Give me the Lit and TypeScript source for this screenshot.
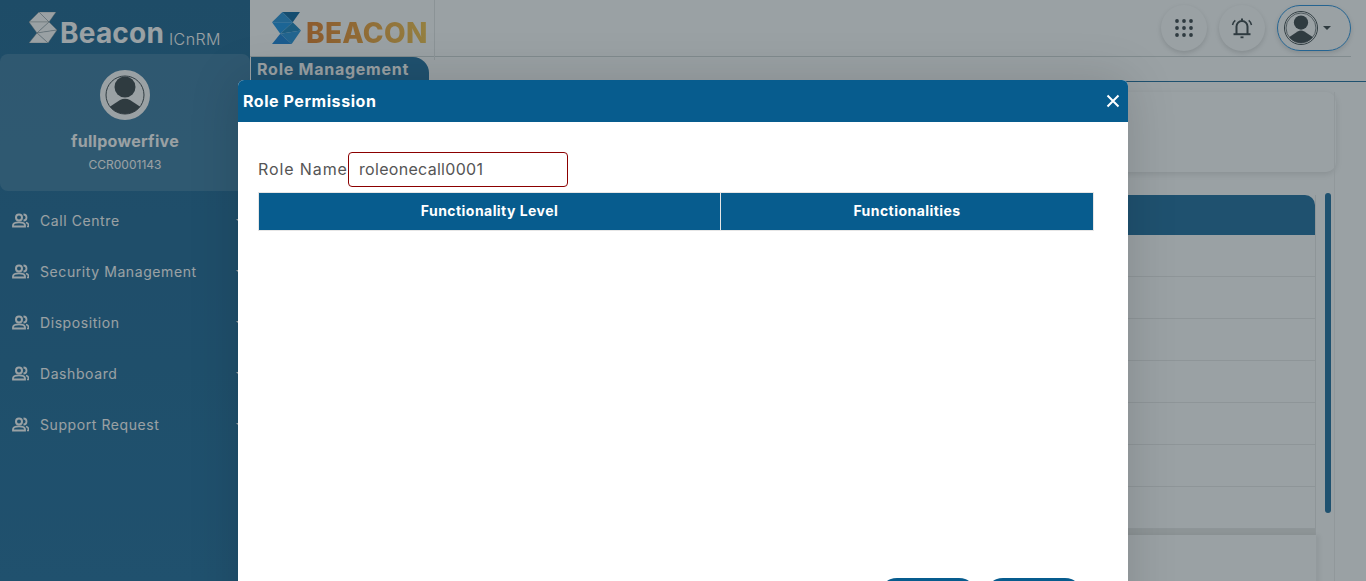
import { LitElement, html, css, svg } from "lit";
import { customElement } from "lit/decorators.js";

const MENU = ["Call Centre", "Security Management", "Disposition", "Dashboard", "Support Request"];
const ROWS = [0, 1, 2, 3, 4, 5, 6];

// same figure in the sidebar card and the header pill
const avatar = (size: number, ring: string, ringW: number, r: number) => html`
  <svg width=${size} height=${size} viewBox="0 0 50 50">
    <defs><clipPath id="av${size}"><circle cx="25" cy="25" r=${r}></circle></clipPath></defs>
    <circle cx="25" cy="25" r="24" fill="#fff"></circle>
    <circle cx="25" cy="25" r=${25 - ringW / 2} fill="none" stroke=${ring} stroke-width=${ringW}></circle>
    <circle cx="25" cy="25" r=${r} fill="none" stroke="#4d5559" stroke-width="1"></circle>
    <g clip-path="url(#av${size})" fill="#4d5559">
      <circle cx="25" cy="17" r="10.5"></circle>
      <path d="M2 42 L20 30 Q25 27.500 30 30 L48 42 V50 H2 Z"></path>
    </g>
  </svg>`;

// S mark, six facets, outlined thinly so the folds show on the flat version
const sMark = (w: number, h: number, c: string[], line = "none") => html`
  <svg width=${w} height=${h} viewBox="0 0 28 31" stroke=${line} stroke-width="0.4">
    <polygon points="10,0 27,0 20,10" fill=${c[0]}></polygon>
    <polygon points="10,0 20,10 0,10" fill=${c[1]}></polygon>
    <polygon points="0,10 20,10 8,21" fill=${c[2]}></polygon>
    <polygon points="20,10 28,18 8,21" fill=${c[3]}></polygon>
    <polygon points="8,21 28,18 19,31" fill=${c[4]}></polygon>
    <polygon points="8,21 19,31 0,31" fill=${c[5]}></polygon>
  </svg>`;

const usersIcon = svg`
  <circle cx="7" cy="4.500" r="3" fill="none" stroke="currentColor" stroke-width="2"></circle>
  <path d="M11.500 1.500a3 3 0 0 1 0 6" fill="none" stroke="currentColor" stroke-width="1.800"></path>
  <path d="M1 13.500v-1.200c0-2 2.200-3 6-3s6 1 6 3v1.200z" fill="none" stroke="currentColor" stroke-width="1.800"></path>
  <path d="M14 9.500c1.700.4 2.500 1.300 2.500 2.800v1.200H15" fill="none" stroke="currentColor" stroke-width="1.600"></path>`;

@customElement("app-root")
export class AppRoot extends LitElement {
  static styles = css`
    :host {
      display: block;
      position: relative;
      width: 1366px;
      height: 581px;
      overflow: hidden;
      font-family: Inter, "Liberation Sans", sans-serif;
      background: #fff;
    }
    .page {
      display: flex;
      height: 581px;
    }
    .side {
      width: 250px;
      flex: none;
      background: linear-gradient(180deg, #31729a 0%, #347aa5 100%);
      color: #fff;
    }
    .side-logo {
      height: 54px;
      display: flex;
      align-items: center;
      padding-left: 29px;
      box-sizing: border-box;
    }
    .side-logo .big {
      font-size: 28px;
      font-weight: 700;
      letter-spacing: 0.2px;
      margin-left: 3px;
      margin-top: 12px;
    }
    .side-logo .small {
      font-size: 16px;
      font-weight: 300;
      letter-spacing: 0.4px;
      margin-left: 5px;
      margin-top: 24px;
    }
    .profile {
      height: 137px;
      box-sizing: border-box;
      padding-top: 16px;
      border-radius: 8px;
      background: rgba(255, 255, 255, 0.14);
      display: flex;
      flex-direction: column;
      align-items: center;
    }
    .profile .name {
      font-size: 16px;
      font-weight: 700;
      letter-spacing: 0.3px;
      margin-top: 11px;
    }
    .profile .code {
      font-size: 12px;
      margin-top: 6px;
    }
    .menu {
      padding-top: 4px;
    }
    .item {
      height: 51px;
      display: flex;
      align-items: center;
      padding-left: 12px;
      font-size: 14px;
      letter-spacing: 0.58px;
    }
    .item svg {
      margin-right: 11px;
    }
    .caret {
      width: 0;
      height: 0;
      margin-left: auto;
      margin-right: 6px;
      border: 4px solid transparent;
      border-top-color: #fff;
      border-bottom: 0;
    }
    .main {
      flex: 1;
      min-width: 0;
    }
    .top {
      height: 57px;
      box-sizing: border-box;
      margin-right: 15px;
      border-bottom: 1px solid #d6dadb;
      display: flex;
      align-items: center;
      padding-left: 22px;
    }
    .brand {
      display: flex;
      align-items: center;
      padding: 10px 6px 10px 0;
      border-right: 1px solid #e6e8e8;
    }
    .brand b {
      font-size: 28px;
      font-weight: 800;
      letter-spacing: 0.3px;
      margin: 10px 0 0 5px;
      background: linear-gradient(90deg, #e98a3a, #f6c85a);
      -webkit-background-clip: text;
      background-clip: text;
      color: transparent;
    }
    .tools {
      margin-left: auto;
      display: flex;
      align-items: center;
      gap: 12px;
    }
    .round {
      width: 46px;
      height: 46px;
      border-radius: 50%;
      display: flex;
      align-items: center;
      justify-content: center;
      box-shadow: 0 2px 5px rgba(0, 0, 0, 0.14);
    }
    .pill {
      width: 74px;
      height: 46px;
      box-sizing: border-box;
      border: 1px solid #3c9ae0;
      border-radius: 23px;
      display: flex;
      align-items: center;
      padding-left: 6px;
      gap: 5px;
      box-shadow: 0 2px 5px rgba(0, 0, 0, 0.14);
    }
    .pill .tri {
      border: 4px solid transparent;
      border-top-color: #4d5559;
      border-bottom: 0;
    }
    .tabs {
      height: 24px;
      border-bottom: 1px solid #327aa7;
      padding-left: 1px;
    }
    .tab {
      width: 178px;
      height: 24px;
      box-sizing: border-box;
      padding: 2px 0 0 6px;
      background: #327aa7;
      color: #fff;
      font-size: 16px;
      font-weight: 700;
      letter-spacing: 0.75px;
      border-radius: 0 16px 0 0;
    }
    .body {
      display: flex;
      padding-top: 10px;
    }
    .content {
      width: 1066px;
      flex: none;
    }
    .card {
      width: 1086px;
      height: 80px;
      border-radius: 10px;
      box-shadow: 0 2px 6px rgba(0, 0, 0, 0.12);
    }
    .grid {
      margin-top: 23px;
      box-sizing: border-box;
      border-right: 1px solid #ebebeb;
    }
    .grid .head {
      height: 40px;
      background: #327aa7;
      border-radius: 0 10px 0 0;
    }
    .grid .row {
      height: 41px;
      border-bottom: 1px solid #ebebeb;
    }
    .band {
      height: 6px;
      background: #e9e9e8;
    }
    .lower {
      height: 60px;
      box-shadow: 4px 0 4px rgba(0, 0, 0, 0.05);
    }
    .track {
      width: 19px;
      flex: none;
      height: 489px;
      box-sizing: border-box;
      padding: 101px 0 0 9px;
      border-right: 1px solid #f0f0f0;
    }
    .bar {
      width: 6px;
      height: 320px;
      border-radius: 3px;
      background: #327aa7;
    }
    .backdrop {
      position: absolute;
      inset: 0;
      background: rgba(2, 20, 28, 0.4);
    }
    .modal {
      position: absolute;
      left: 238px;
      top: 80px;
      width: 890px;
      height: 560px;
      background: #fff;
      border-radius: 6px 6px 0 0;
      overflow: hidden;
      box-shadow: 0 0 50px rgba(0, 0, 0, 0.15);
    }
    .m-head {
      height: 42px;
      background: #075c8e;
      color: #fff;
      display: flex;
      align-items: center;
      justify-content: space-between;
      padding: 0 8px 0 5px;
      font-size: 16px;
      font-weight: 700;
      letter-spacing: 0.55px;
    }
    .m-body {
      padding: 30px 34px 0 20px;
    }
    .field {
      display: flex;
      align-items: center;
      height: 35px;
      font-size: 16px;
      color: #555;
    }
    .field label {
      width: 90px;
      letter-spacing: 0.9px;
      padding-bottom: 2px;
    }
    .input {
      width: 220px;
      height: 35px;
      box-sizing: border-box;
      border: 1px solid #8b0000;
      border-radius: 4px;
      padding: 0 10px 2px;
      display: flex;
      align-items: center;
      letter-spacing: 0.3px;
    }
    .tablewrap {
      display: flex;
      gap: 4px;
      margin-top: 5px;
    }
    .perm {
      width: 836px;
      height: 39px;
      flex: none;
      display: flex;
      background: #075c8e;
      color: #fff;
      font-size: 14px;
      font-weight: 700;
      letter-spacing: 0.45px;
      border: 1px solid #e6e6e6;
      box-sizing: border-box;
    }
    .perm div {
      display: flex;
      align-items: center;
      justify-content: center;
      padding-bottom: 2px;
    }
    .perm div:first-child {
      width: 461px;
      border-right: 1px solid #e6e6e6;
    }
    .perm div:last-child {
      flex: 1;
    }
    .m-bar {
      width: 6px;
      height: 321px;
      margin-top: 4px;
      border-radius: 3px;
      background: #075c8e;
    }
    .actions {
      display: flex;
      justify-content: flex-end;
      gap: 8px;
      margin-top: 61px;
      padding-right: 11px;
    }
    .btn {
      width: 98px;
      height: 36px;
      border-radius: 18px;
      background: #075c8e;
    }
  `;

  render() {
    return html`
      <div class="page">
        <aside class="side">
          <div class="side-logo">
            ${sMark(28, 31, ["#fff", "#fff", "#fff", "#fff", "#fff", "#fff"], "#8a9295")}
            <span class="big">Beacon</span><span class="small">ICnRM</span>
          </div>
          <div class="profile">
            ${avatar(50, "#fff", 3.5, 19)}
            <div class="name">fullpowerfive</div>
            <div class="code">CCR0001143</div>
          </div>
          <nav class="menu">
            ${MENU.map(
              (m) => html`<div class="item">
                <svg width="17" height="15" viewBox="0 0 17 15">${usersIcon}</svg>
                <span>${m}</span>
                <i class="caret"></i>
              </div>`
            )}
          </nav>
        </aside>
        <main class="main">
          <header class="top">
            <div class="brand">
              ${sMark(29, 34, ["#2273a8", "#3a9bdc", "#2e9be6", "#2f8ec4", "#3a9bdc", "#2e8ddc"])}
              <b>BEACON</b>
            </div>
            <div class="tools">
              <div class="round">
                <svg width="18" height="18" viewBox="0 0 18 18" fill="#4d5559">
                  ${[2, 9, 16].map((y) =>
                    [2, 9, 16].map((x) => svg`<circle cx=${x} cy=${y} r="1.9"></circle>`)
                  )}
                </svg>
              </div>
              <div class="round">
                <svg width="22" height="22" viewBox="0 0 22 22" fill="none" stroke="#4d5559" stroke-width="2">
                  <path d="M5.500 17V9.500a5.500 5.500 0 0 1 11 0V17"></path>
                  <path d="M2.500 17.200h17" stroke-width="2"></path>
                  <path d="M9.500 20.300h3" stroke-width="1.800"></path>
                  <path d="M11 1.500v2"></path>
                  <path d="M1.500 8c.4-2 1.300-3.500 2.800-4.700M20.500 8c-.4-2-1.300-3.500-2.800-4.700" stroke-width="1.500"></path>
                </svg>
              </div>
              <div class="pill">
                ${avatar(34, "#4d5559", 1.4, 22)}
                <i class="tri"></i>
              </div>
            </div>
          </header>
          <div class="tabs"><div class="tab">Role Management</div></div>
          <div class="body">
            <div class="content">
              <div class="card"></div>
              <div class="grid">
                <div class="head"></div>
                ${ROWS.map(() => html`<div class="row"></div>`)}
                <div class="band"></div>
              </div>
              <div class="lower"></div>
            </div>
            <div class="track"><div class="bar"></div></div>
          </div>
        </main>
      </div>
      <div class="backdrop"></div>
      <section class="modal">
        <div class="m-head">
          <span>Role Permission</span>
          <svg width="14" height="14" viewBox="0 0 14 14" stroke="#fff" stroke-width="2">
            <path d="M1.500 1.500l11 11M12.500 1.500l-11 11"></path>
          </svg>
        </div>
        <div class="m-body">
          <div class="field">
            <label>Role Name</label>
            <div class="input">roleonecall0001</div>
          </div>
          <div class="tablewrap">
            <div class="perm">
              <div>Functionality Level</div>
              <div>Functionalities</div>
            </div>
            <div class="m-bar"></div>
          </div>
          <div class="actions">
            <div class="btn"></div>
            <div class="btn"></div>
          </div>
        </div>
      </section>
    `;
  }
}
